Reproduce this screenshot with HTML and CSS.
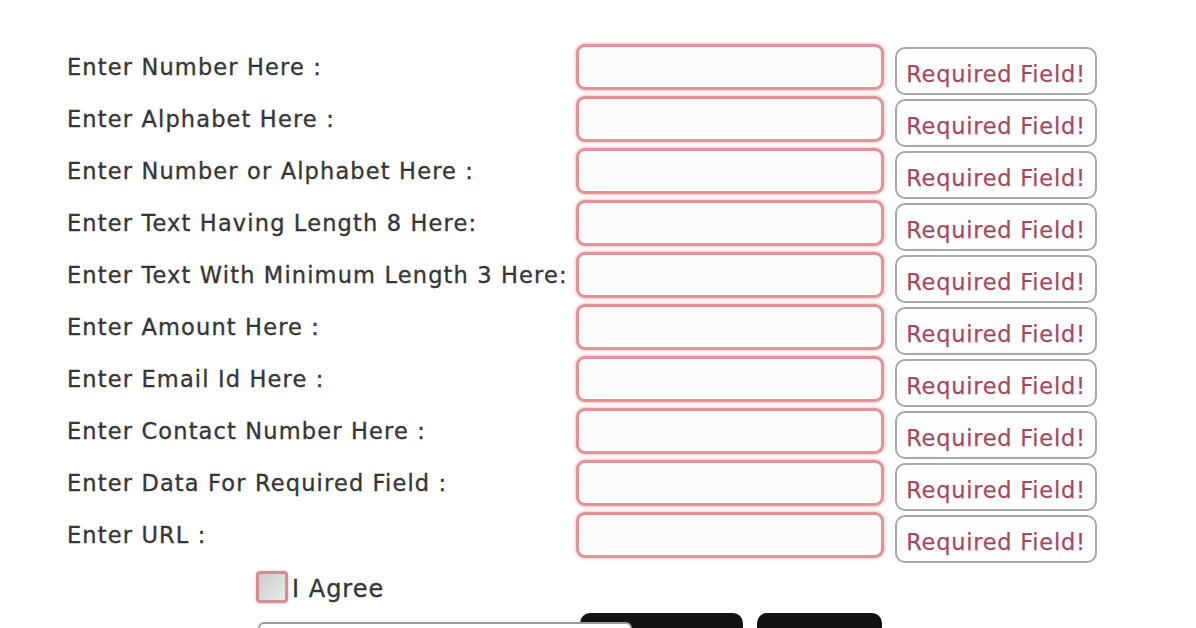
FILE: index.html
```html
<!DOCTYPE html>
<html>
<head>
<meta charset="utf-8">
<link rel="stylesheet" href="styles.css">
</head>
<body>
<div class="form">
  <div class="row"><label class="lbl">Enter Number Here :</label><div class="inp"></div><div class="err">Required Field!</div></div>
  <div class="row"><label class="lbl">Enter Alphabet Here :</label><div class="inp"></div><div class="err">Required Field!</div></div>
  <div class="row"><label class="lbl">Enter Number or Alphabet Here :</label><div class="inp"></div><div class="err">Required Field!</div></div>
  <div class="row"><label class="lbl">Enter Text Having Length 8 Here:</label><div class="inp"></div><div class="err">Required Field!</div></div>
  <div class="row"><label class="lbl">Enter Text With Minimum Length 3 Here:</label><div class="inp"></div><div class="err">Required Field!</div></div>
  <div class="row"><label class="lbl">Enter Amount Here :</label><div class="inp"></div><div class="err">Required Field!</div></div>
  <div class="row"><label class="lbl">Enter Email Id Here :</label><div class="inp"></div><div class="err">Required Field!</div></div>
  <div class="row"><label class="lbl">Enter Contact Number Here :</label><div class="inp"></div><div class="err">Required Field!</div></div>
  <div class="row"><label class="lbl">Enter Data For Required Field :</label><div class="inp"></div><div class="err">Required Field!</div></div>
  <div class="row"><label class="lbl">Enter URL :</label><div class="inp"></div><div class="err">Required Field!</div></div>
  <div class="agree"><span class="cb"></span><span class="agree-txt">I Agree</span></div>
  <div class="actions">
    <div class="btn btn-a"></div>
    <div class="btn btn-b"></div>
    <div class="overlay-box"></div>
  </div>
</div>
</body>
</html>
```
FILE: styles.css
```css
html, body {
  margin: 0;
  padding: 0;
  background: #ffffff;
  height: 628px;
  overflow: hidden;
}
body {
  font-family: "DejaVu Sans", Verdana, sans-serif;
  color: #363636;
}
.form {
  padding-top: 44px;
  padding-left: 67px;
}
.row {
  display: flex;
  align-items: flex-start;
  height: 52px;
}
.lbl {
  width: 509px;
  flex: none;
  font-size: 22.5px;
  letter-spacing: 1.15px;
  line-height: 47px;
  white-space: nowrap;
  -webkit-text-stroke: 0.35px #363636;
}
.inp {
  width: 302px;
  height: 40px;
  flex: none;
  border: 3px solid #e2939a;
  border-radius: 9px;
  background: #fcfbfc;
  box-shadow: 0 0 3px 1px rgba(235, 150, 158, 0.55);
}
.err {
  margin-left: 11px;
  margin-top: 3px;
  width: 198px;
  height: 44px;
  border: 2px solid #a9a9ab;
  border-radius: 10px;
  background: #fefefe;
  color: #a6495d;
  font-size: 22.5px;
  letter-spacing: 0.75px;
  line-height: 50px;
  overflow: hidden;
  text-align: center;
  white-space: nowrap;
  -webkit-text-stroke: 0.25px #a6495d;
}
.agree {
  display: flex;
  align-items: center;
  margin-left: 189px;
  margin-top: 6px;
  height: 34px;
}
.cb {
  width: 26px;
  height: 26px;
  border: 3px solid #d88a93;
  border-radius: 4px;
  background: linear-gradient(135deg, #c8ccca, #e8ebea);
  box-shadow: 0 0 3px rgba(220, 130, 140, 0.6);
}
.agree-txt {
  margin-left: 4px;
  font-size: 24px;
  letter-spacing: 1px;
  margin-top: 4px;
  -webkit-text-stroke: 0.35px #363636;
}
.actions {
  position: relative;
  display: flex;
  margin-left: 513px;
  margin-top: 9px;
  gap: 14px;
}
.btn {
  height: 40px;
  background: #111111;
  border-radius: 10px;
}
.btn-a { width: 163px; }
.btn-b { width: 125px; }
.overlay-box {
  position: absolute;
  left: -322px;
  top: 9px;
  width: 370px;
  height: 40px;
  background: #ffffff;
  border: 2px solid #9a9a9a;
  border-radius: 6px;
}
```
